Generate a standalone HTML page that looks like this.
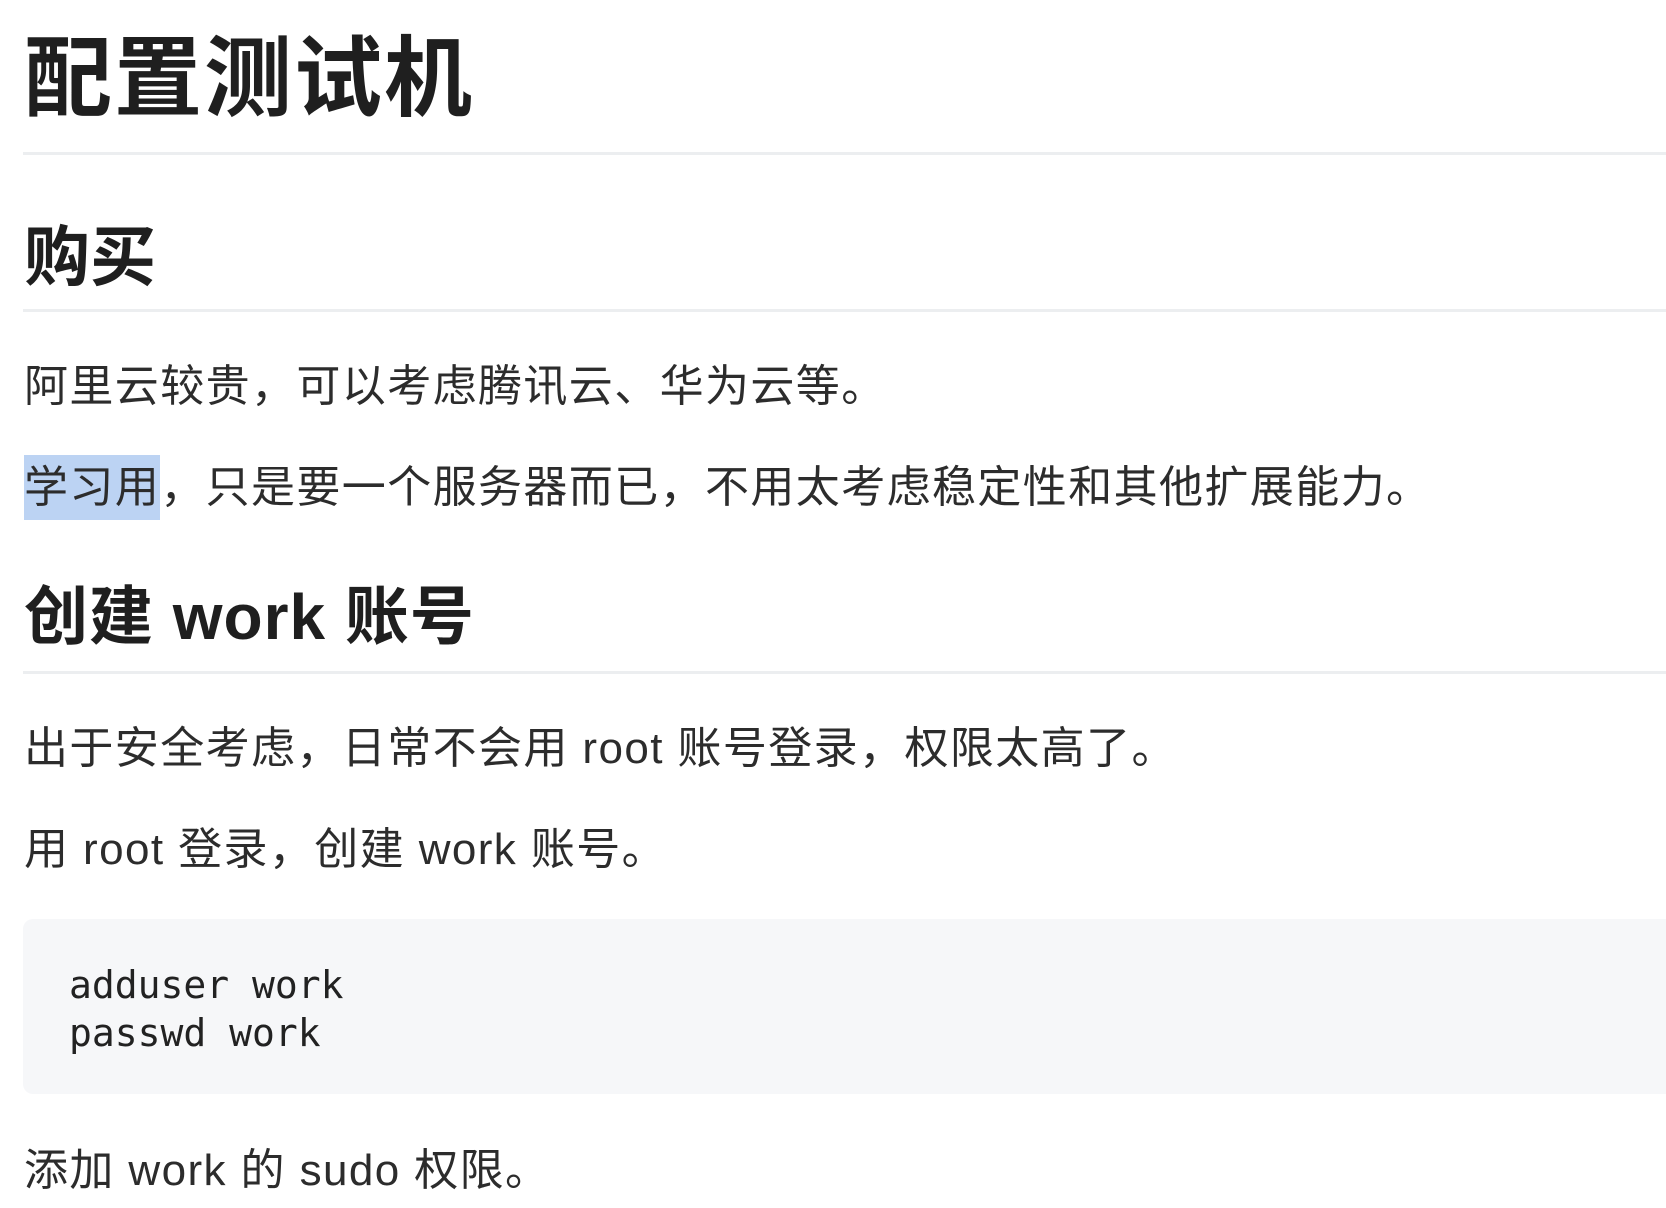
<!DOCTYPE html>
<html><head><meta charset="utf-8"><style>
html,body{margin:0;padding:0;background:#fff;width:1666px;height:1208px;overflow:hidden}
body{font-family:"Liberation Sans","Noto Sans CJK SC",sans-serif;color:#2a2a2a;position:relative}
.a{position:absolute;left:24px;white-space:nowrap;line-height:1}
.hr{position:absolute;left:23px;right:0;height:3px;background:#eceef0}
h1,h2{margin:0;font-weight:bold;color:#1f1f1f}
.p{font-size:44px;color:#2c2c2c;letter-spacing:1.4px}
.code{position:absolute;left:23px;right:0;top:919px;height:175px;background:#f6f7f9;border-radius:10px 0 0 10px}
.code pre{margin:0;position:absolute;left:46px;top:42px;font-family:"DejaVu Sans Mono","Liberation Mono",monospace;font-size:38px;line-height:48px;color:#222}
.hl{background:#bcd3f3}
</style></head><body>
<h1 class="a" style="top:35px;font-size:88px;letter-spacing:2px">配置测试机</h1>
<div class="hr" style="top:152px"></div>
<h2 class="a" style="top:224px;font-size:66px">购买</h2>
<div class="hr" style="top:309px"></div>
<div class="a p" style="top:365px">阿里云较贵，可以考虑腾讯云、华为云等。</div>
<div class="a p" style="top:466px"><span class="hl" style="padding:8px 0">学习用</span>，只是要一个服务器而已，不用太考虑稳定性和其他扩展能力。</div>
<h2 class="a" style="top:585px;font-size:64px;letter-spacing:1px">创建 work 账号</h2>
<div class="hr" style="top:671px"></div>
<div class="a p" style="top:727px">出于安全考虑，日常不会用 root 账号登录，权限太高了。</div>
<div class="a p" style="top:828px">用 root 登录，创建 work 账号。</div>
<div class="code"><pre>adduser work
passwd work</pre></div>
<div class="a p" style="top:1149px">添加 work 的 sudo 权限。</div>
</body></html>
